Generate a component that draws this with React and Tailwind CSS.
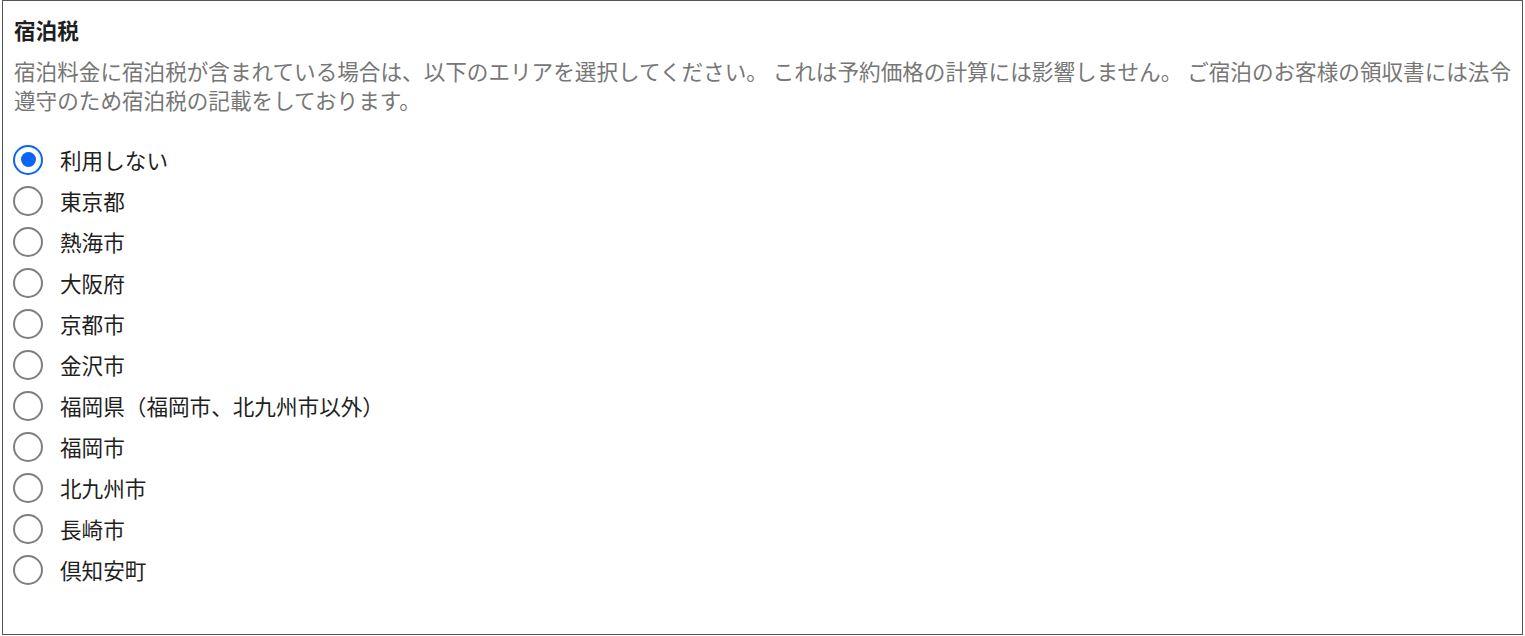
import React from "react";

const options = [
  "利用しない",
  "東京都",
  "熱海市",
  "大阪府",
  "京都市",
  "金沢市",
  "福岡県（福岡市、北九州市以外）",
  "福岡市",
  "北九州市",
  "長崎市",
  "倶知安町",
];

function Radio({ checked }) {
  if (checked) {
    return (
      <span className="flex h-[30px] w-[30px] shrink-0 items-center justify-center rounded-full border-[2.5px] border-[#0b64f4] bg-white">
        <span className="h-[15px] w-[15px] rounded-full bg-[#0b64f4]" />
      </span>
    );
  }
  return (
    <span className="h-[30px] w-[30px] shrink-0 rounded-full border-2 border-[#7f7f7f] bg-white" />
  );
}

export default function App() {
  const [sel, setSel] = React.useState(0);
  return (
    <div
      className="ml-[2px] h-[635px] w-[1521px] border border-[#555555] bg-white pl-[10px] pr-[6px] pt-[14px]"
      style={{ fontFamily: '"Noto Sans CJK JP", "Noto Sans", sans-serif' }}
    >
      <div className="pl-[1px] text-[21.6px] font-bold leading-[29px] text-[#1f1f1f]">宿泊税</div>
      <p className="mt-[12px] pl-[1px] text-[21.6px] leading-[29px] text-[#767676]">
        宿泊料金に宿泊税が含まれている場合は、以下のエリアを選択してください。 これは予約価格の計算には影響しません。 ご宿泊のお客様の領収書には法令遵守のため宿泊税の記載をしております。
      </p>
      <div className="mt-[25px] flex flex-col">
        {options.map((o, i) => (
          <label
            key={o}
            className="flex h-[41px] cursor-pointer items-center gap-[17px]"
            onClick={() => setSel(i)}
          >
            <Radio checked={sel === i} />
            <span className="text-[21.6px] leading-[29px] text-[#1f1f1f]">{o}</span>
          </label>
        ))}
      </div>
    </div>
  );
}
